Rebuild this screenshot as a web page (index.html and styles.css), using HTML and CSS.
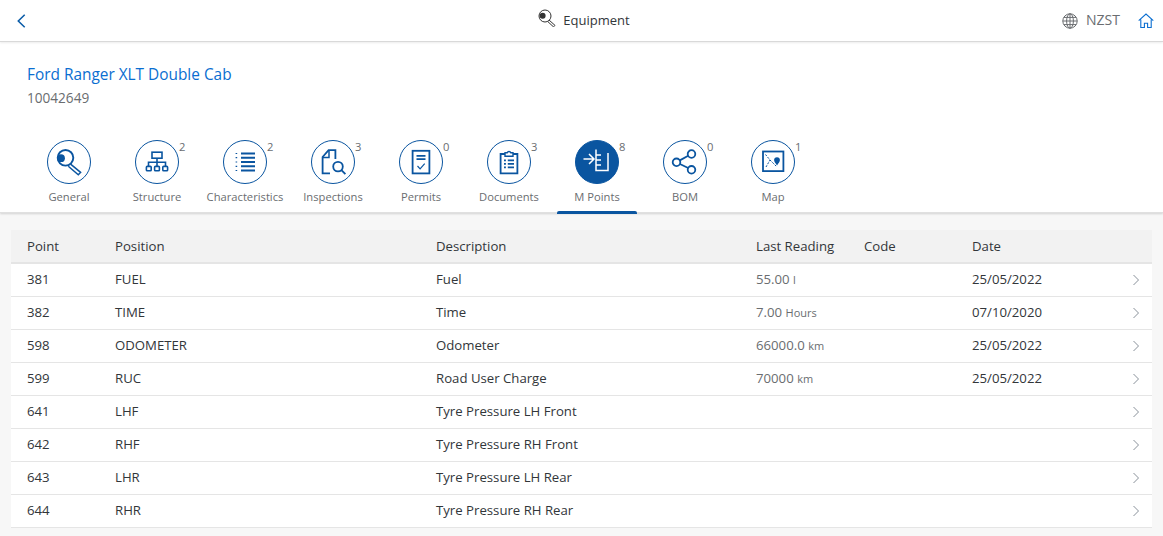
FILE: index.html
```html
<!DOCTYPE html>
<html lang="en">
<head>
<meta charset="utf-8">
<title>Equipment</title>
<link rel="stylesheet" href="styles.css">
</head>
<body>
<header class="shell">
  <div class="shell-left">
    <svg class="back" viewBox="0 0 12 16"><path d="M9.5 1.2 2.5 8l7 6.8" fill="none" stroke="#0a5ca8" stroke-width="1.7"/></svg>
  </div>
  <div class="shell-title">
    <svg class="title-icon" viewBox="0 0 18 18"><circle cx="7" cy="7" r="6" fill="none" stroke="#333" stroke-width="1"/><circle cx="4.6" cy="6.8" r="3" fill="#333"/><path d="M11 11l6 5.4-1.5 1.5L9.6 12.4" fill="none" stroke="#333" stroke-width="1"/></svg>
    <span class="shell-text">Equipment</span>
  </div>
  <div class="shell-right">
    <svg class="globe" viewBox="0 0 16 16"><g fill="none" stroke="#6a6d70" stroke-width="1"><circle cx="8" cy="8" r="7.2"/><ellipse cx="8" cy="8" rx="3.4" ry="7.2"/><path d="M8 .8v14.4M.8 8h14.4M1.8 4.4h12.4M1.8 11.6h12.4"/></g></svg>
    <span class="tz">NZST</span>
    <svg class="home" viewBox="0 0 16 16"><path d="M.7 7.6 8 1l7.3 6.6M2.8 6.5v8h3.6v-4.3h3.2v4.3h3.6v-8" fill="none" stroke="#0a6ed1" stroke-width="1.1"/></svg>
  </div>
</header>

<section class="object-header">
  <div class="object-title">Ford Ranger XLT Double Cab</div>
  <div class="object-id">10042649</div>
  <nav class="tabs">
    <div class="tab">
      <div class="circle"><svg viewBox="0 0 28 28"><circle cx="10.5" cy="9.8" r="7.8" fill="none" stroke="#0a55a0" stroke-width="1.9"/><circle cx="6" cy="10.2" r="3.9" fill="#0a55a0"/><path d="M15.6 16.2l10 8.2-2.3 2.4-10-8.6" fill="none" stroke="#0a55a0" stroke-width="1.5"/></svg></div>
      <div class="tab-label">General</div>
    </div>
    <div class="tab">
      <div class="circle"><svg viewBox="0 0 28 28"><g fill="none" stroke="#0a55a0" stroke-width="1.6"><rect x="9" y="4.2" width="10" height="6"/><path d="M14 10.2v4M5.5 18v-3.7h17V18M14 14.3V18"/><rect x="3.4" y="18.4" width="4.8" height="4.4" rx=".9"/><rect x="11.6" y="18.4" width="4.8" height="4.4" rx=".9"/><rect x="19.8" y="18.4" width="4.8" height="4.4" rx=".9"/></g></svg></div>
      <div class="tab-label">Structure</div>
      <span class="count">2</span>
    </div>
    <div class="tab">
      <div class="circle"><svg viewBox="0 0 28 28"><path d="M10 5.5h14M10 9.7h14M10 14h14M10 18.3h14M10 22.5h14" stroke="#0a55a0" stroke-width="2"/><path d="M4.6 5.5h1.6M4.6 9.7h1.6M4.6 14h1.6M4.6 18.3h1.6M4.6 22.5h1.6" stroke="#0a55a0" stroke-width="1.2"/></svg></div>
      <div class="tab-label">Characteristics</div>
      <span class="count">2</span>
    </div>
    <div class="tab">
      <div class="circle"><svg viewBox="0 0 28 28"><g fill="none" stroke="#0a55a0" stroke-width="1.8"><path d="M11 25.4H3.6V9L9.6 2.2h6.8V11"/><path d="M3.6 9.4h6.4V2.2" stroke-width="1.5"/><circle cx="19" cy="18.6" r="4.8"/><path d="M22.4 22.2l4 4"/></g></svg></div>
      <div class="tab-label">Inspections</div>
      <span class="count">3</span>
    </div>
    <div class="tab">
      <div class="circle"><svg viewBox="0 0 28 28"><g fill="none" stroke="#0a55a0"><rect x="5.6" y="2.8" width="16.8" height="22.6" stroke-width="1.8"/><path d="M9.5 7.8h9M9.5 11.2h9" stroke-width="1.8"/><path d="M10.5 18l2.6 2.8 4.6-5.2" stroke-width="1.2"/></g></svg></div>
      <div class="tab-label">Permits</div>
      <span class="count">0</span>
    </div>
    <div class="tab">
      <div class="circle"><svg viewBox="0 0 28 28"><g fill="none" stroke="#0a55a0"><path d="M10 6H5.6v19.4h16.8V6H18" stroke-width="1.8"/><path d="M10 8.2V4.8h2.2a1.9 1.9 0 0 1 3.6 0H18v3.4z" stroke-width="1.4"/><path d="M12.8 12.4H19M12.8 15.9H19M12.8 19.4H19M9 12.4h1.9M9 15.9h1.9M9 19.4h1.9" stroke-width="1.9"/></g></svg></div>
      <div class="tab-label">Documents</div>
      <span class="count">3</span>
    </div>
    <div class="tab active">
      <div class="circle"><svg viewBox="0 0 28 28"><g fill="none" stroke="#fff" stroke-width="1.5"><path d="M13 1.5v21h12V5"/><path d="M13 7h5M13 12h5M13 17h5"/><path d="M.5 11h10M6 6l5 5-5 5"/></g></svg></div>
      <div class="tab-label">M Points</div>
      <span class="count">8</span>
    </div>
    <div class="tab">
      <div class="circle"><svg viewBox="0 0 28 28"><g fill="none" stroke="#0a55a0" stroke-width="1.8"><circle cx="5.5" cy="14.3" r="3.8"/><circle cx="20.5" cy="6" r="3.8"/><circle cx="20.5" cy="21.8" r="3.8"/><path d="M8.8 12.4l8.4-4.6M8.9 16l8.3 4"/></g></svg></div>
      <div class="tab-label">BOM</div>
      <span class="count">0</span>
    </div>
    <div class="tab">
      <div class="circle"><svg viewBox="0 0 28 28"><rect x="4" y="3.5" width="20.4" height="19.6" fill="none" stroke="#0a55a0" stroke-width="1.8"/><path d="M6.5 6.5 11 12l-4 7M11 12l7 7" fill="none" stroke="#0a55a0" stroke-width="1" stroke-dasharray="2 1.3"/><path d="M18 17.4c-1.6-2.4-2.9-3.6-2.9-5.3a2.9 2.9 0 0 1 5.8 0c0 1.7-1.3 2.9-2.9 5.3z" fill="#0a55a0"/></svg></div>
      <div class="tab-label">Map</div>
      <span class="count">1</span>
    </div>
  </nav>
</section>

<main class="content">
  <table class="points">
    <colgroup>
      <col class="c-point"><col class="c-position"><col class="c-desc"><col class="c-reading"><col class="c-code"><col class="c-date"><col class="c-nav">
    </colgroup>
    <thead>
      <tr><th>Point</th><th>Position</th><th>Description</th><th>Last Reading</th><th>Code</th><th>Date</th><th></th></tr>
    </thead>
    <tbody>
      <tr><td>381</td><td>FUEL</td><td>Fuel</td><td class="reading">55.00 <small>l</small></td><td></td><td>25/05/2022</td><td class="nav"><svg class="chev" viewBox="0 0 8 12"><path d="M1.5 1l5 5-5 5" fill="none" stroke="#89919a" stroke-width="1"/></svg></td></tr>
      <tr><td>382</td><td>TIME</td><td>Time</td><td class="reading">7.00 <small>Hours</small></td><td></td><td>07/10/2020</td><td class="nav"><svg class="chev" viewBox="0 0 8 12"><path d="M1.5 1l5 5-5 5" fill="none" stroke="#89919a" stroke-width="1"/></svg></td></tr>
      <tr><td>598</td><td>ODOMETER</td><td>Odometer</td><td class="reading">66000.0 <small>km</small></td><td></td><td>25/05/2022</td><td class="nav"><svg class="chev" viewBox="0 0 8 12"><path d="M1.5 1l5 5-5 5" fill="none" stroke="#89919a" stroke-width="1"/></svg></td></tr>
      <tr><td>599</td><td>RUC</td><td>Road User Charge</td><td class="reading">70000 <small>km</small></td><td></td><td>25/05/2022</td><td class="nav"><svg class="chev" viewBox="0 0 8 12"><path d="M1.5 1l5 5-5 5" fill="none" stroke="#89919a" stroke-width="1"/></svg></td></tr>
      <tr><td>641</td><td>LHF</td><td>Tyre Pressure LH Front</td><td class="reading"></td><td></td><td></td><td class="nav"><svg class="chev" viewBox="0 0 8 12"><path d="M1.5 1l5 5-5 5" fill="none" stroke="#89919a" stroke-width="1"/></svg></td></tr>
      <tr><td>642</td><td>RHF</td><td>Tyre Pressure RH Front</td><td class="reading"></td><td></td><td></td><td class="nav"><svg class="chev" viewBox="0 0 8 12"><path d="M1.5 1l5 5-5 5" fill="none" stroke="#89919a" stroke-width="1"/></svg></td></tr>
      <tr><td>643</td><td>LHR</td><td>Tyre Pressure LH Rear</td><td class="reading"></td><td></td><td></td><td class="nav"><svg class="chev" viewBox="0 0 8 12"><path d="M1.5 1l5 5-5 5" fill="none" stroke="#89919a" stroke-width="1"/></svg></td></tr>
      <tr><td>644</td><td>RHR</td><td>Tyre Pressure RH Rear</td><td class="reading"></td><td></td><td></td><td class="nav"><svg class="chev" viewBox="0 0 8 12"><path d="M1.5 1l5 5-5 5" fill="none" stroke="#89919a" stroke-width="1"/></svg></td></tr>
    </tbody>
  </table>
</main>
</body>
</html>
```
FILE: styles.css
```css
* { box-sizing: border-box; }
html, body { margin: 0; padding: 0; }
body {
  width: 1163px;
  height: 536px;
  overflow: hidden;
  background: #f7f7f7;
  font-family: "Open Sans", "Liberation Sans", sans-serif;
  color: #32363a;
  font-size: 14px;
}
.shell {
  position: relative;
  z-index: 2;
  height: 42px;
  background: #fff;
  border-bottom: 1px solid #d9d9d9;
  box-shadow: 0 1px 2px rgba(0,0,0,.08);
  display: grid;
  grid-template-columns: 1fr auto 1fr;
  align-items: center;
  padding: 0 9px 0 14px;
}
.shell-left { padding-left: 2px; }
.back { width: 11px; height: 16px; display: block; }
.shell-title { display: flex; align-items: center; gap: 7px; font-size: 13px; color: #32363a; }
.shell-text { margin-bottom: 2px; }
.title-icon { width: 18px; height: 18px; margin-top: -5px; }
.shell-right { display: flex; justify-content: flex-end; align-items: center; color: #6a6d70; }
.globe { width: 16px; height: 16px; }
.tz { margin: 0 0 2px 8px; }
.home { width: 16px; height: 16px; margin-left: 18px; }
.object-header {
  height: 171px;
  background: #fff;
  padding: 24px 0 0 27px;
  box-shadow: 0 1px 2px rgba(0,0,0,.15);
  border-bottom: 1px solid #e0e0e0;
  position: relative;
}
.object-title { font-size: 15.4px; line-height: 18px; color: #0a6ed1; }
.object-id { font-size: 13.6px; line-height: 18px; margin-top: 5px; color: #6a6d70; }
.tabs { display: flex; margin: 33px 0 0 -27px; padding-left: 25px; }
.tab {
  position: relative;
  width: 88px;
  height: 74px;
  display: flex;
  flex-direction: column;
  align-items: center;
}
.circle {
  width: 44px;
  height: 44px;
  border-radius: 50%;
  border: 1px solid #0a55a0;
  display: flex;
  align-items: center;
  justify-content: center;
}
.circle svg { width: 28px; height: 28px; }
.tab.active .circle { background: #0a55a0; }
.tab.active::after {
  content: "";
  position: absolute;
  left: 4px;
  right: 4px;
  bottom: 0;
  height: 3px;
  background: #0a55a0;
  border-radius: 2px 2px 0 0;
}
.tab-label { margin-top: 5px; font-size: 11.2px; line-height: 15px; color: #6a6d70; white-space: nowrap; }
.count { position: absolute; left: 66px; top: 0; font-size: 11.2px; line-height: 14px; color: #6a6d70; }
.content { padding: 17px 11px 0; }
.points { width: 1141px; border-collapse: collapse; table-layout: fixed; background: #fff; }
.c-point { width: 88px; }
.c-position { width: 321px; }
.c-desc { width: 320px; }
.c-reading, .c-code { width: 108px; }
.c-nav { width: 50px; }
th {
  height: 33px;
  background: #f2f2f2;
  border-bottom: 2px solid #e5e5e5;
  font-weight: 400;
  font-size: 13.2px;
  text-align: left;
  padding: 0 0 0 16px;
  color: #32363a;
}
td {
  height: 33px;
  border-bottom: 1px solid #e5e5e5;
  font-size: 13.2px;
  padding: 0 0 2px 16px;
  color: #32363a;
}
.reading { color: #6a6d70; }
.reading small { font-size: 11px; }
td.nav { padding: 0 0 0 30px; }
.chev { width: 8px; height: 12px; display: block; }
```
